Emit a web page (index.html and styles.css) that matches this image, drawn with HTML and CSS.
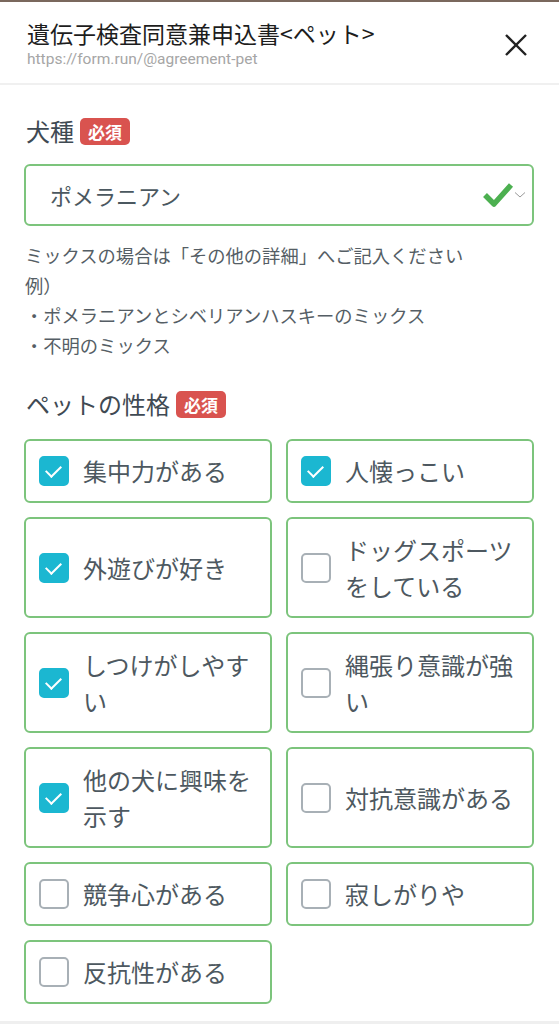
FILE: index.html
```html
<!DOCTYPE html>
<html lang="ja">
<head>
  <meta charset="UTF-8">
  <title>遺伝子検査同意兼申込書&lt;ペット&gt;</title>
  <meta name="viewport" content="width=device-width, initial-scale=1.0">
  <link rel="stylesheet" href="styles.css">
</head>
<body>

  <header class="topbar">
    <div class="titles">
      <div class="page-title">遺伝子検査同意兼申込書&lt;ペット&gt;</div>
      <div class="page-url">https://form.run/@agreement-pet</div>
    </div>
    <svg class="close" width="26" height="26" viewBox="0 0 26 26">
      <path d="M3 3 L23 23 M23 3 L3 23" stroke="#222" stroke-width="2.4" fill="none"/>
    </svg>
  </header>

  <main class="form">
    <div class="field-label">犬種 <span class="badge">必須</span></div>
    <div class="select">
      <span>ポメラニアン</span>
      <span class="select-icons">
        <svg width="32" height="26" viewBox="0 0 32 26">
          <path d="M3 13 L12 22 L29 3" stroke="#4cb050" stroke-width="5.5" fill="none" stroke-linejoin="round"/>
        </svg>
        <svg width="12" height="8" viewBox="0 0 12 8">
          <path d="M1 1.5 L6 6 L11 1.5" stroke="#999" stroke-width="1" fill="none"/>
        </svg>
      </span>
    </div>
    <p class="help">
      ミックスの場合は「その他の詳細」へご記入ください<br>
      例）<br>
      ・ポメラニアンとシベリアンハスキーのミックス<br>
      ・不明のミックス
    </p>

    <div class="field-label">ペットの性格 <span class="badge">必須</span></div>
    <div class="options">
      <label class="option"><span class="box checked"></span><span class="text">集中力がある</span></label>
      <label class="option"><span class="box checked"></span><span class="text">人懐っこい</span></label>
      <label class="option tall"><span class="box checked"></span><span class="text">外遊びが好き</span></label>
      <label class="option tall"><span class="box"></span><span class="text">ドッグスポーツをしている</span></label>
      <label class="option tall"><span class="box checked"></span><span class="text">しつけがしやすい</span></label>
      <label class="option tall"><span class="box"></span><span class="text">縄張り意識が強い</span></label>
      <label class="option tall"><span class="box checked"></span><span class="text">他の犬に興味を示す</span></label>
      <label class="option tall"><span class="box"></span><span class="text">対抗意識がある</span></label>
      <label class="option"><span class="box"></span><span class="text">競争心がある</span></label>
      <label class="option"><span class="box"></span><span class="text">寂しがりや</span></label>
      <label class="option"><span class="box"></span><span class="text">反抗性がある</span></label>
    </div>
  </main>

  <div class="bottom-strip"></div>

</body>
</html>
```

FILE: styles.css
```css
body {
  margin: 0;
  font-family: "Noto Sans CJK JP", "Noto Sans", sans-serif;
  background: #fff;
  color: #46525b;
  border-top: 2px solid #7a685d;
  height: 1022px;
  display: flex;
  flex-direction: column;
  overflow: hidden;
}

.topbar {
  height: 83px;
  flex: none;
  box-sizing: border-box;
  padding: 15px 30px 0 27px;
  border-bottom: 2px solid #f0f0f0;
  display: flex;
  justify-content: space-between;
  align-items: flex-start;
}

.page-title {
  font-size: 23px;
  line-height: 32px;
  color: #1d1d1d;
  font-weight: normal;
}

.page-url {
  font-family: Roboto, "Liberation Sans", sans-serif;
  font-size: 15.5px;
  line-height: 20px;
  color: #a6a6a6;
}

.close {
  margin-top: 15px;
}

.form {
  flex: 1;
  padding: 30px 25px 0 24px;
}

.field-label {
  font-size: 24px;
  line-height: 32px;
  color: #3f4a53;
  display: flex;
  align-items: center;
  gap: 6px;
  padding-left: 2px;
}

.badge {
  display: inline-block;
  background: #d9534f;
  color: #fff;
  font-size: 17px;
  font-weight: bold;
  line-height: 27px;
  padding: 0 8px;
  border-radius: 5px;
}

.select {
  margin-top: 17px;
  height: 62px;
  box-sizing: border-box;
  border: 2px solid #7cc47c;
  border-radius: 6px;
  padding: 0 6px 0 24px;
  display: flex;
  align-items: center;
  justify-content: space-between;
  font-size: 22px;
  color: #4b5860;
}

.select-icons {
  display: flex;
  align-items: center;
}

.help {
  margin: 14px 0 0 1px;
  font-size: 18.3px;
  line-height: 30px;
  color: #555e65;
}

.form .help + .field-label {
  margin-top: 28px;
}

.options {
  margin-top: 19px;
  display: grid;
  grid-template-columns: 1fr 1fr;
  gap: 14px 14px;
}

.option {
  border: 2px solid #7cc47c;
  border-radius: 6px;
  padding: 12px 13px;
  display: flex;
  align-items: center;
  gap: 14px;
  min-height: 36px;
}

.option.tall {
  min-height: 73px;
}

.text {
  font-size: 24px;
  line-height: 36px;
  color: #4d5860;
}

.box {
  flex: none;
  width: 26px;
  height: 26px;
  border: 2px solid #a8b0b6;
  border-radius: 5px;
  position: relative;
}

.box.checked {
  background: #1bb7d1;
  border-color: #1bb7d1;
}

.box.checked::after {
  content: "";
  position: absolute;
  left: 8px;
  top: 4px;
  width: 7px;
  height: 13px;
  border-right: 2px solid #fff;
  border-bottom: 2px solid #fff;
  transform: rotate(45deg);
}

.bottom-strip {
  height: 3px;
  flex: none;
  background: #efefef;
}
```
